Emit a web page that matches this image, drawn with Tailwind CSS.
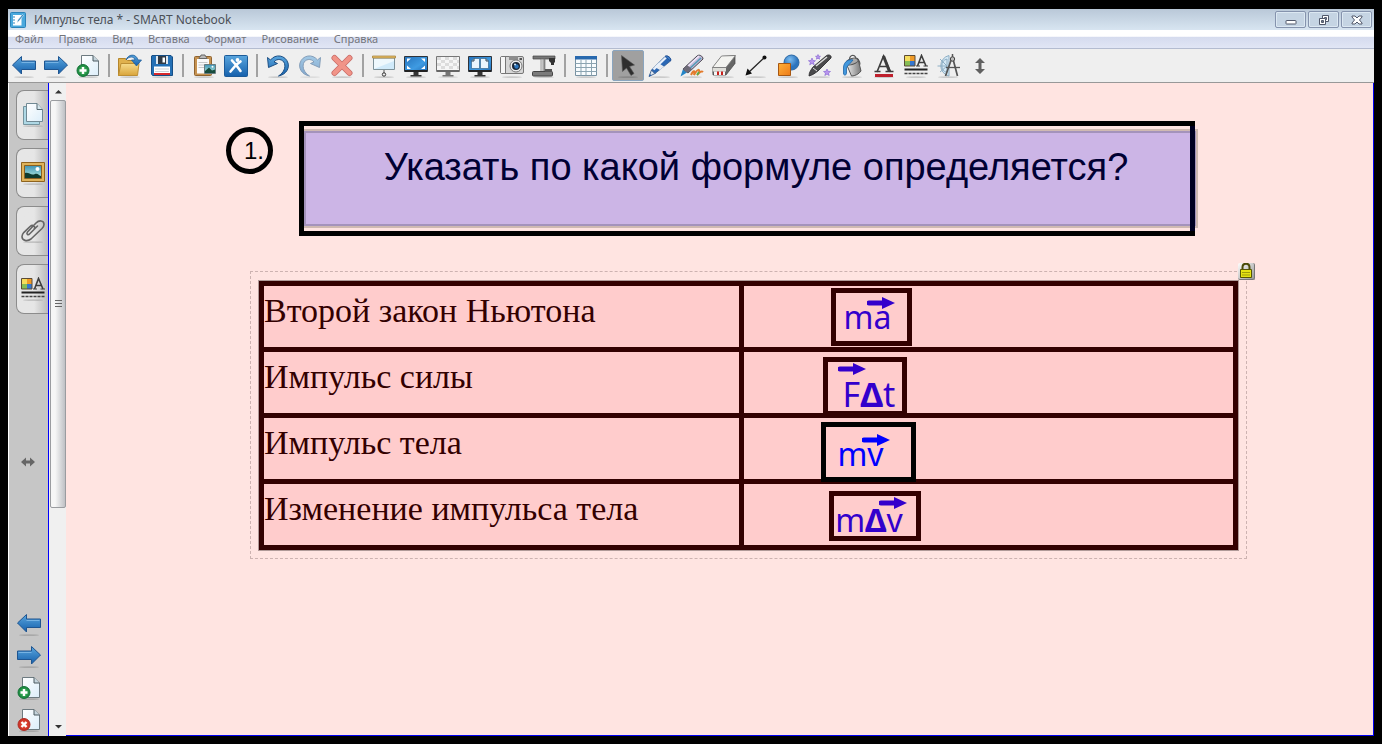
<!DOCTYPE html>
<html lang="ru">
<head>
<meta charset="utf-8">
<title>Импульс тела * - SMART Notebook</title>
<script src="https://cdn.jsdelivr.net/npm/@tailwindcss/browser@4"></script>
</head>
<body class="flex h-screen flex-col overflow-hidden bg-black px-2 pt-[9px] pb-2 font-['Noto_Sans','Open_Sans',sans-serif]">

<svg class="absolute size-0" aria-hidden="true">
  <defs>
    <linearGradient id="blue" x1="0" y1="0" x2="0" y2="1"><stop offset="0" stop-color="#5aa6de"/><stop offset="1" stop-color="#1560ac"/></linearGradient>
    <linearGradient id="screen" x1="0" y1="0" x2="1" y2="1"><stop offset="0" stop-color="#2573bd"/><stop offset=".6" stop-color="#3f9be2"/><stop offset="1" stop-color="#1e6bb5"/></linearGradient>
    <linearGradient id="folder" x1="0" y1="0" x2="0" y2="1"><stop offset="0" stop-color="#f7dc8c"/><stop offset="1" stop-color="#d9a43a"/></linearGradient>
    <linearGradient id="orange" x1="0" y1="0" x2="1" y2="1"><stop offset="0" stop-color="#ffb13a"/><stop offset="1" stop-color="#ec7a17"/></linearGradient>
    <linearGradient id="metal" x1="0" y1="0" x2="1" y2="0"><stop offset="0" stop-color="#f4f4f4"/><stop offset=".5" stop-color="#b5b5b5"/><stop offset="1" stop-color="#777"/></linearGradient>
    <linearGradient id="sheet" x1="0" y1="0" x2="1" y2="1"><stop offset="0" stop-color="#fff"/><stop offset="1" stop-color="#dceefa"/></linearGradient>
    <linearGradient id="sky" x1="0" y1="0" x2="0" y2="1"><stop offset="0" stop-color="#3f93b5"/><stop offset="1" stop-color="#b9efdf"/></linearGradient>
    <radialGradient id="green"><stop offset="0" stop-color="#4fc46a"/><stop offset="1" stop-color="#16813a"/></radialGradient>
    <radialGradient id="red"><stop offset="0" stop-color="#f0614c"/><stop offset="1" stop-color="#c8281c"/></radialGradient>
    <radialGradient id="ball" cx=".4" cy=".3"><stop offset="0" stop-color="#7dbdf0"/><stop offset="1" stop-color="#2c74bd"/></radialGradient>
    <symbol id="shade" viewBox="0 0 24 24"><ellipse cx="12" cy="23.2" rx="10" ry=".9" fill="#000" opacity=".15"/></symbol>
    <symbol id="left" viewBox="0 0 24 24"><use href="#shade"/><path d="M.5 11 9.500 2.500v4.500h14v8.500h-14V20z" fill="url(#blue)" stroke="#1f5590"/><path d="M9.500 8.500h13" stroke="#8cc4ee" opacity=".7"/></symbol>
    <symbol id="right" viewBox="0 0 24 24"><use href="#shade"/><path d="M23.500 11 14.500 2.500v4.500H.5v8.500h14V20z" fill="url(#blue)" stroke="#1f5590"/><path d="M1.500 8.500h13" stroke="#8cc4ee" opacity=".7"/></symbol>
    <symbol id="page" viewBox="0 0 24 24"><path d="M5.500 1.500h11.500l5.500 5.500v14.500h-17z" fill="url(#sheet)" stroke="#6d7a80"/><path d="M17 1.500V7h5.500" fill="#c5d4dc" stroke="#4c5a60"/></symbol>
    <symbol id="addpage" viewBox="0 0 24 24"><use href="#shade"/><use href="#page"/><circle cx="7" cy="16.500" r="6" fill="url(#green)" stroke="#16753a"/><path d="M7 13v7M3.500 16.500h7" stroke="#fff" stroke-width="2.400"/></symbol>
    <symbol id="delpage" viewBox="0 0 24 24"><use href="#shade"/><use href="#page"/><circle cx="7" cy="16.500" r="6" fill="url(#red)" stroke="#b03028"/><path d="m4.500 14 5 5m0-5-5 5" stroke="#fff" stroke-width="2.400"/></symbol>
    <symbol id="style" viewBox="0 0 24 24"><use href="#shade"/><path d="M1 2h5v5H1z" fill="#f5dc5c"/><path d="M6 2h5v5H6z" fill="#f09a26"/><path d="M1 7h5v5H1z" fill="#86bd55"/><path d="M6 7h5v5H6z" fill="#3576ce"/><path d="M.5 1.500h10.500v10.500H.5z" fill="none" stroke="#5b4a34"/><path d="m13.500 12 4-10.500L22 12M15 8.500h5" fill="none" stroke="#3e3e3e" stroke-width="1.600"/><path d="M12 12h4m3.500 0h4.500" stroke="#3e3e3e" stroke-width="1.200"/><path d="M.5 15.500h23" stroke="#222" stroke-width="2"/><path d="M.5 19.500h23" stroke="#444" stroke-width="1.500" stroke-dasharray="3 1"/></symbol>
    <symbol id="stand" viewBox="0 0 24 24"><use href="#shade"/><path d="M9.500 18h5v3h3v1.500h-11V21h3z" fill="#333"/></symbol>
    <symbol id="arrow" viewBox="0 0 28 14"><path d="M2 7h18" stroke="currentColor" stroke-width="5" stroke-linecap="round"/><path d="M15 1v12l13-6z" fill="currentColor"/></symbol>
  </defs>
</svg>

<header class="flex h-[21px] shrink-0 items-center justify-between bg-linear-to-b from-[#b9c8d8] to-[#d8e5f1] pl-[2px]">
  <div class="flex items-center gap-2">
    <svg class="size-4" viewBox="0 0 16 16"><rect x=".5" y=".5" width="15" height="15" rx="1" fill="#4aa9dd" stroke="#2b83b9"/><path d="M3 3h8.500v10.500H3z" fill="#fff"/><path d="M3 5h2m-2 3h2m-2 3h2" stroke="#3387bd"/><path d="m7 11 .8-3L12.500 2.500l1 1L9 9z" fill="#2e7fb5" stroke="#fff" stroke-width=".5"/></svg>
    <h1 class="text-xs leading-4 text-[#4b5057]">Импульс тела * - SMART Notebook</h1>
  </div>
  <div class="flex items-center gap-[2px] pr-[2px]">
    <button aria-label="Свернуть" class="flex h-[17px] w-[31px] items-center justify-center rounded-xs border border-[#8593ad] bg-[#c5d4e3] shadow-[inset_0_0_0_1px_#dce8f2]"><svg class="h-3 w-4" viewBox="0 0 16 12"><rect x="3" y="6.500" width="10" height="3.500" rx=".5" fill="#fff" stroke="#51586a"/></svg></button>
    <button aria-label="Развернуть" class="flex h-[17px] w-[31px] items-center justify-center rounded-xs border border-[#8593ad] bg-[#c5d4e3] shadow-[inset_0_0_0_1px_#dce8f2]"><svg class="h-3 w-4" viewBox="0 0 16 12" fill="#fff" stroke="#51586a"><path d="M6.500 1.500h6v6h-6zM8.500 3.500h2v2h-2z" fill-rule="evenodd"/><path d="M3.500 4.500h6v6h-6zM5.500 6.500h2v2h-2z" fill-rule="evenodd"/></svg></button>
    <button aria-label="Закрыть" class="flex h-[17px] w-[31px] items-center justify-center rounded-xs border border-[#8593ad] bg-[#c5d4e3] shadow-[inset_0_0_0_1px_#dce8f2]"><svg class="h-3 w-4" viewBox="0 0 16 12"><path d="M3 2h3l2 2 2-2h3v1L10.500 6 13 9v1h-3L8 8l-2 2H3V9l2.500-3L3 3z" fill="#fff" stroke="#51586a"/></svg></button>
  </div>
</header>

<nav class="flex h-[19px] shrink-0 items-center gap-[15px] border-b border-[#b4bcd0] bg-linear-to-b from-white from-35% via-[#d5dbee] via-40% to-[#e1e6f5] pl-[7px] text-[11px] leading-4 text-[#73757c]">
  <button>Файл</button><button>Правка</button><button>Вид</button><button>Вставка</button><button>Формат</button><button>Рисование</button><button>Справка</button>
</nav>

<div role="toolbar" class="flex h-[34px] shrink-0 items-center border-b border-[#989898] bg-[#efefef]">
  <button aria-label="Предыдущая страница" class="flex w-8 justify-center"><svg class="size-6"><use href="#left"/></svg></button>
  <button aria-label="Следующая страница" class="flex w-8 justify-center"><svg class="size-6"><use href="#right"/></svg></button>
  <button aria-label="Добавить страницу" class="flex w-8 justify-center"><svg class="size-6"><use href="#addpage"/></svg></button>
  <span class="flex w-[10px] justify-center"><i class="h-[23px] w-[2px] bg-[#a2a2a2]"></i></span>
  <button aria-label="Открыть" class="flex w-8 justify-center"><svg class="size-6" viewBox="0 0 24 24"><use href="#shade"/><path d="M.5 4.500h7l2 2h8v15H.5z" fill="#e0b14d" stroke="#b5862c"/><path d="M.5 21.500 3 9.500h18l-1.500 12z" fill="url(#folder)" stroke="#bd8f34"/><path d="M8 6C10 0 18-1 20 6h3.500l-5 6-5-6H17c-1-4-6-4-9 0z" fill="url(#blue)" stroke="#1f5e9a" stroke-width=".8"/></svg></button>
  <button aria-label="Сохранить" class="flex w-8 justify-center"><svg class="size-6" viewBox="0 0 24 24"><use href="#shade"/><path d="M2 1.500h19l1.500 1.500v18.500h-20L1.500 20V2z" fill="#2470b5" stroke="#174f86"/><path d="M6 2h12v8H6z" fill="#dfe7ef"/><path d="M8 2h8v8H8z" fill="#303a44"/><path d="M12.500 3.500h2.500v5h-2.500z" fill="#fff"/><path d="M4 12.500h16v8H4z" fill="#fff"/><path d="M5 15h14m-14 2.500h14" stroke="#cbd1d6"/><path d="M4 19h16v2H4z" fill="#d8282b"/></svg></button>
  <span class="flex w-[10px] justify-center"><i class="h-[23px] w-[2px] bg-[#a2a2a2]"></i></span>
  <button aria-label="Вставить" class="flex w-8 justify-center"><svg class="size-6" viewBox="0 0 24 24"><use href="#shade"/><rect x="2.500" y="2.500" width="17" height="19" rx="1" fill="#c69250" stroke="#8f6330"/><path d="M5 5h12v14.500H5z" fill="#fafafa"/><path d="M7 4.500c0-2 2-1.500 2-3.500h4c0 2 2 1.500 2 3.500z" fill="#b9b9b9" stroke="#666"/><path d="M6.500 8.500h9m-9 2.500h9m-9 2.500h6" stroke="#c8c8c8"/><path d="M12.500 10.500h11v9h-11z" fill="url(#sky)" stroke="#687c80"/><path d="m13 17 4-3.500 3 3 3-1V19H13z" fill="#174c3d"/><circle cx="20.500" cy="12.800" r="1" fill="#fff"/></svg></button>
  <button aria-label="Экран" class="flex w-8 justify-center"><svg class="size-6" viewBox="0 0 24 24"><rect x=".5" y="1.500" width="23" height="21" rx="1" fill="url(#blue)" stroke="#1c5b99"/><path d="M8 6.500 12 11l4.500-3.500M12 11l-5.500 6.500M12.500 11.500l4 5.500" fill="none" stroke="#fff" stroke-width="2.600" stroke-linecap="round" stroke-linejoin="round"/><circle cx="13.500" cy="6" r="1.900" fill="#fff"/></svg></button>
  <span class="flex w-[10px] justify-center"><i class="h-[23px] w-[2px] bg-[#a2a2a2]"></i></span>
  <button aria-label="Отменить" class="flex w-8 justify-center"><svg class="size-6" viewBox="0 0 24 24"><use href="#shade"/><path d="m1.500 3.500 1 10 9-4-3.500-1.500c3-4 9-3 10.500 1.500 1.200 4-.5 9-6 12.500 8-1.500 11-8 9.500-13C19.500 1 9.500-.5 4.500 6z" fill="url(#blue)" stroke="#1c4f84"/></svg></button>
  <button aria-label="Повторить" class="flex w-8 justify-center"><svg class="size-6 opacity-50" viewBox="0 0 24 24"><use href="#shade"/><path d="m22.500 3.500-1 10-9-4 3.500-1.500c-3-4-9-3-10.500 1.500-1.200 4 .5 9 6 12.500-8-1.500-11-8-9.500-13C4.500 1 14.500-.5 19.500 6z" fill="url(#blue)" stroke="#1c4f84"/></svg></button>
  <button aria-label="Удалить" class="flex w-8 justify-center"><svg class="size-6" viewBox="0 0 24 24"><use href="#shade"/><path d="m4.500 4 15 15m0-15-15 15" stroke="#c86c68" stroke-width="6" stroke-linecap="round"/><path d="m4.500 4 15 15m0-15-15 15" stroke="#f19488" stroke-width="4.500" stroke-linecap="round"/></svg></button>
  <span class="flex w-[10px] justify-center"><i class="h-[23px] w-[2px] bg-[#a2a2a2]"></i></span>
  <button aria-label="Затенение экрана" class="flex w-8 justify-center"><svg class="size-6" viewBox="0 0 24 24"><use href="#shade"/><path d="M1.500 4h21v11.500h-21z" fill="#eef8fd" stroke="#7d9199"/><path d="M2 15 22 7v8z" fill="#d0eafa"/><path d="M.5 2h23v2H.5z" fill="#e5bd68" stroke="#a17c33" stroke-width=".7"/><path d="M12 16v3" stroke="#555"/><circle cx="12" cy="20.500" r="1.700" fill="none" stroke="#333"/></svg></button>
  <button aria-label="Полный экран" class="flex w-8 justify-center"><svg class="size-6" viewBox="0 0 24 24"><use href="#stand"/><path d="M.5 2.500h23v15H.5z" fill="url(#screen)" stroke="#30343a"/><path d="M1 17h22" stroke="#222" stroke-width="2"/><path d="M3 8V4.500h4zM21 8V4.500h-4zM3 11.500V15h4zM21 11.500V15h-4z" fill="#fff"/></svg></button>
  <button aria-label="Прозрачный фон" class="flex w-8 justify-center"><svg class="size-6" viewBox="0 0 24 24"><g opacity=".65"><use href="#stand"/></g><path d="M.5 2.500h23v15H.5z" fill="#f6f6f6" stroke="#777"/><path d="M1 4.500h22m-18 3h18M1 10.500h22m-18 3h18" stroke="#dcdcdc" stroke-width="3" stroke-dasharray="4 4"/><path d="M1 17h22" stroke="#666" stroke-width="2"/></svg></button>
  <button aria-label="Две страницы" class="flex w-8 justify-center"><svg class="size-6" viewBox="0 0 24 24"><use href="#stand"/><path d="M.5 2.500h23v15H.5z" fill="url(#screen)" stroke="#30343a"/><path d="M1 17h22" stroke="#222" stroke-width="2"/><path d="M3.500 7 6 4.500h5.500v10h-8zM12.500 4.500H18L20.500 7v7.500h-8z" fill="#e9f5fd" stroke="#34658e" stroke-width=".7"/><path d="M6 4.500V7H3.500M18 4.500V7h2.500" fill="none" stroke="#345"/></svg></button>
  <button aria-label="Захват экрана" class="flex w-8 justify-center"><svg class="size-6" viewBox="0 0 24 24"><use href="#shade"/><rect x=".5" y="2.500" width="23" height="17" rx="1.500" fill="#d6d6d6" stroke="#777"/><path d="M1 3h4v16H1z" fill="#f6f6f6"/><path d="M5.500 3v16" stroke="#777"/><path d="M9 2h9v4H9z" fill="#8d8d8d"/><path d="M19.500 4h2.500v2h-2.500z" fill="#555"/><circle cx="16" cy="12" r="6" fill="#eee" stroke="#777"/><circle cx="16" cy="12" r="4" fill="#182536"/><circle cx="16.500" cy="12.500" r="2.200" fill="#2b75bd"/><circle cx="15" cy="10.500" r="1" fill="#d7eeff"/></svg></button>
  <button aria-label="Документ-камера" class="flex w-8 justify-center"><svg class="size-6" viewBox="0 0 24 24"><use href="#shade"/><path d="M1 2h22v3H1z" fill="#777" stroke="#444" stroke-width=".7"/><path d="M17 4h6v4l-1 1v2h-3V9l-2-2z" fill="#333"/><path d="M9 5h4v13H9z" fill="url(#metal)" stroke="#777" stroke-width=".7"/><rect x=".5" y="17.500" width="20" height="4.500" rx="1" fill="#7b7b7b" stroke="#444"/><path d="M13 15h7v3h-7z" fill="#555"/></svg></button>
  <span class="flex w-[10px] justify-center"><i class="h-[23px] w-[2px] bg-[#a2a2a2]"></i></span>
  <button aria-label="Таблица" class="flex w-8 justify-center"><svg class="size-6" viewBox="0 0 24 24"><use href="#shade"/><path d="M1.500 2.500h21v19h-21z" fill="#f8fcfe" stroke="#7892a2"/><path d="M1 2h22v3.500H1z" fill="#2869ae"/><path d="M1.500 9.500h21m-21 4h21m-21 4h21M7 5.500v16m5-16v16m5.500-16v16" stroke="#8ba4b1"/></svg></button>
  <span class="flex w-[10px] justify-center"><i class="h-[23px] w-[2px] bg-[#a2a2a2]"></i></span>
  <button aria-label="Выбрать" aria-pressed="true" class="flex h-[31px] w-8 items-center justify-center rounded-xs border border-[#8aa5bf] bg-[#a0a0a0]"><svg class="size-6" viewBox="0 0 24 24"><use href="#shade"/><path d="m5.500 1.500 1 16 4-3.500 4.500 7.500 3-2-4.500-7 5-1.500z" fill="#2e2e2e" stroke="#555" stroke-width=".6"/></svg></button>
  <button aria-label="Перо" class="flex w-8 justify-center"><svg class="size-6" viewBox="0 0 24 24"><use href="#shade"/><path d="m3.500 16 3.500 3.500-6 3z" fill="#dfe6ee" stroke="#294e7f" stroke-width=".8"/><path d="m1 22.500 1-2.500 1.500 1.500z" fill="#1e5aa8"/><path d="M3.500 16 17 2.500c2-2 7 1.500 5.500 4.500L7 19.500z" fill="#2a67b4" stroke="#315a90" stroke-width=".8"/><path d="m6.500 13 4-4 5.500 3.500-4 3.500z" fill="#e8ebf0"/><path d="M5.500 15.500 18.500 3" stroke="#e9f1fb" stroke-width="2.400"/><path d="m17 2.500 5.500 4.500c1.500-3-3.500-6.500-5.500-4.500z" fill="#3a7cc8" stroke="#204d92" stroke-width=".8"/></svg></button>
  <button aria-label="Художественное перо" class="flex w-8 justify-center"><svg class="size-6" viewBox="0 0 24 24"><use href="#shade"/><path d="M11 21c3-6 4-4 3 0 4-7 6-6 5-2 2-2 3-2 4-1" fill="none" stroke="#e37b2c" stroke-width="2"/><path d="m17 21 2-3" stroke="#5daa47" stroke-width="2"/><path d="m3 15 4 3.500-6.500 4z" fill="#2385c7"/><path d="M3 15 17 2c2-2 6 0 6 3L8 19z" fill="#c5b9d8" stroke="#4a4852"/><path d="M5 15 19 2" stroke="#f0e7f8" stroke-width="1.500"/><path d="M7 17 21 4" stroke="#4e9bb6" stroke-width="1.500"/><path d="m3 15 4-4 5 4-4 4z" fill="#6d6a77"/></svg></button>
  <button aria-label="Ластик" class="flex w-8 justify-center"><svg class="size-6" viewBox="0 0 24 24"><use href="#shade"/><path d="m.5 14 9-11.500L23 1.500v8L14 21H1z" fill="#666" stroke="#444" stroke-width=".7"/><path d="M.5 13.500 9.500 2 23.500 1.500 14 13.500z" fill="#f3f3f0" stroke="#777" stroke-width=".8"/><path d="M.5 14H14v3.500H.5z" fill="#deded9"/><path d="M2 17.500h11V21H2z" fill="#f5f5f5"/><path d="M5 17.500h2V21H5zM9 17.500h2V21H9z" fill="#c8201b"/></svg></button>
  <button aria-label="Линия" class="flex w-8 justify-center"><svg class="size-6" viewBox="0 0 24 24"><use href="#shade"/><path d="m4 19 17-16" stroke="#222" stroke-width="1.300"/><path d="m1.500 21.500 2-7 4.500 5z" fill="#111"/><circle cx="20.500" cy="3.500" r="2" fill="#111"/></svg></button>
  <button aria-label="Фигуры" class="flex w-8 justify-center"><svg class="size-6" viewBox="0 0 24 24"><use href="#shade"/><circle cx="15.500" cy="8.500" r="7.500" fill="url(#ball)" stroke="#2b68a5"/><path d="M2.500 9.500h12v12h-12z" fill="url(#orange)" stroke="#a65712"/></svg></button>
  <button aria-label="Волшебное перо" class="flex w-8 justify-center"><svg class="size-6" viewBox="0 0 24 24"><use href="#shade"/><path d="M1 22c0-4 2-6 4-9L18 2c2-2 6-1 5 2L10 17c-3 2-5 4-9 5z" fill="#4a4a4c" stroke="#252527" stroke-width=".8"/><path d="M8 12 19 3" stroke="#ddd" stroke-width="1.500"/><path d="m5 14 4 3" stroke="#ddd"/><g fill="#b995ee" stroke="#8260d2" stroke-width=".6"><path d="m4 4 1 2.500 2.500.2-2 1.600.7 2.500L4 9.400l-2.300 1.400.7-2.500-2-1.600L3 6.500z"/><path d="m10 .5.7 1.700 1.800.1-1.400 1.100.5 1.800-1.600-1L8.400 5.200l.5-1.800L7.500 2.300l1.800-.1z"/><path d="m19 15 1 2.300 2.500.2-2 1.600.7 2.400-2.200-1.400-2.200 1.400.7-2.400-2-1.600 2.500-.2z"/></g></svg></button>
  <button aria-label="Заливка" class="flex w-8 justify-center"><svg class="size-6" viewBox="0 0 24 24"><use href="#shade"/><path d="m6 9 12-4 3 12c-2 3-6 5-9.500 5z" fill="url(#metal)" stroke="#555"/><ellipse cx="12" cy="7.500" rx="6.500" ry="3" transform="rotate(-20 12 7.500)" fill="#aaa" stroke="#555"/><path d="M10 8C8 1 15-1 16 4.500c2 0 4 3 4 6" fill="none" stroke="#555" stroke-width="1.200"/><path d="M13 6C8 5 4 8 3.500 13v7c1 2 3 1 3-1v-5c1-2 2-3 3.500-4.500z" fill="#4297dc" stroke="#1f65a7" stroke-width=".8"/></svg></button>
  <button aria-label="Текст" class="flex w-8 justify-center"><svg class="size-6" viewBox="0 0 24 24"><use href="#shade"/><path d="M5 18 11.500 2l7 16M8 12.500h7.500" fill="none" stroke="#3c3c3c" stroke-width="1.600"/><path d="m11.500 2 6 15.500" stroke="#3c3c3c" stroke-width="3"/><path d="M2.500 17.500h6m5 0h8" stroke="#3c3c3c" stroke-width="1.400"/><path d="M3 20h18v3H3z" fill="#be202d"/></svg></button>
  <button aria-label="Свойства" class="flex w-8 justify-center"><svg class="size-6"><use href="#style"/></svg></button>
  <button aria-label="Измерительные инструменты" class="flex w-8 justify-center"><svg class="size-6" viewBox="0 0 24 24"><use href="#shade"/><path d="M13 1.500a10.500 10.500 0 0 0 0 20.500z" fill="#d5e8f4" stroke="#8daec4"/><path d="M11 5a7 7 0 0 0 0 13.500zM1.500 12H11M4 5l7 7-7 6" fill="none" stroke="#8daec4"/><path d="M15.500 5 9.500 22M17 5l4.500 17" stroke="#555" stroke-width="1.700"/><path d="M10 13.500h14" stroke="#555" stroke-width="1.300"/><circle cx="16.500" cy="5" r="2.200" fill="#bbb" stroke="#444"/><path d="M16.500 0v3" stroke="#555" stroke-width="1.500"/></svg></button>
  <button aria-label="Переместить панель" class="flex w-8 justify-center"><svg class="size-6" viewBox="0 0 24 24"><path d="m12 4 5 5h-3.500v6H17l-5 5-5-5h3.500V9H7z" fill="#606060"/></svg></button>
</div>

<div class="flex min-h-0 flex-1">
  <aside class="flex w-10 shrink-0 flex-col border-l border-white bg-[#c6c6c6] pt-[7px]">
    <div class="flex flex-col gap-2 pl-[7px]">
      <button aria-label="Сортировщик страниц" class="flex h-[50px] items-center justify-center rounded-l-lg border border-r-0 border-[#8c8c8c] bg-linear-to-r from-[#e6e6e6] from-55% to-[#bababa]"><svg class="size-6" viewBox="0 0 24 24"><use href="#shade"/><path d="M2.500 3.500h16v18h-16z" fill="#aed8e5" stroke="#75949e"/><path d="M5.500.5H16l5.500 6V18.500h-16z" fill="url(#sheet)" stroke="#708994"/><path d="M16 .5v6h5.500" fill="#d6e7ee" stroke="#556870"/></svg></button>
      <button aria-label="Галерея" class="flex h-[50px] items-center justify-center rounded-l-lg border border-r-0 border-[#8c8c8c] bg-linear-to-r from-[#e6e6e6] from-55% to-[#bababa]"><svg class="size-6" viewBox="0 0 24 24"><use href="#shade"/><path d="M.5 1.500h23v19H.5z" fill="#dfb35b" stroke="#8f641f"/><path d="M3.500 4.500h17v13h-17z" fill="url(#sky)" stroke="#8a6121"/><path d="M4 12c4-1 6 3 10 1 3-1 4 2 6 2v2H4z" fill="#0e3b2e"/><circle cx="16.500" cy="8" r="2" fill="#fff"/></svg></button>
      <button aria-label="Вложения" class="flex h-[50px] items-center justify-center rounded-l-lg border border-r-0 border-[#8c8c8c] bg-linear-to-r from-[#e6e6e6] from-55% to-[#bababa]"><svg class="size-6" viewBox="0 0 24 24"><use href="#shade"/><path d="m16.500 7-8 8c-1.500 1.500-3.500 0-2-2l8.500-9c3-3 8-3 8 1.500 0 2-1 3-2 4L10 20c-4 3-9 1.500-9-2.500 0-2 1-3 2-4.200L9 7.500c3-2.500 6 0 4 3l-5 5" fill="none" stroke="#666" stroke-width="1.600" stroke-linecap="round"/></svg></button>
      <button aria-label="Свойства объекта" class="flex h-[50px] items-center justify-center rounded-l-lg border border-r-0 border-[#8c8c8c] bg-linear-to-r from-[#e6e6e6] from-55% to-[#bababa]"><svg class="size-6"><use href="#style"/></svg></button>
    </div>
    <div class="flex flex-1 items-center justify-center pr-[2px]">
      <svg class="h-3 w-4" viewBox="0 0 16 12"><path d="m1 5 5-4.500v3h4v-3L15 5l-5 4.500v-3H6v3z" fill="#666"/></svg>
    </div>
    <div class="flex flex-col gap-2 pb-1 pl-2">
      <button aria-label="Назад" class="size-6"><svg class="size-6"><use href="#left"/></svg></button>
      <button aria-label="Вперёд" class="size-6"><svg class="size-6"><use href="#right"/></svg></button>
      <button aria-label="Новая страница" class="size-6"><svg class="size-6"><use href="#addpage"/></svg></button>
      <button aria-label="Удалить страницу" class="size-6"><svg class="size-6"><use href="#delpage"/></svg></button>
    </div>
  </aside>

  <div class="flex w-[18px] shrink-0 flex-col border-l border-[#0000ff] bg-[#f0f0f0] pl-px">
    <svg class="h-[17px] w-4 shrink-0" viewBox="0 0 16 17"><path d="m5 10.500 3.500-3.500 3.500 3.500z" fill="#333"/></svg>
    <div class="flex-1">
      <div class="flex h-[66%] flex-col items-center justify-center gap-[2px] rounded-xs border border-[#9a9ca0] bg-linear-to-r from-[#f6f6f6] from-30% to-[#bfc1c5]">
        <i class="h-px w-[7px] bg-[#666]"></i><i class="h-px w-[7px] bg-[#666]"></i><i class="h-px w-[7px] bg-[#666]"></i>
      </div>
    </div>
    <svg class="h-[18px] w-4 shrink-0" viewBox="0 0 16 18"><path d="m5 7 3.500 3.500L12 7z" fill="#333"/></svg>
  </div>

  <main class="min-w-0 flex-1 border-r border-b border-[#0000f0] bg-[#ffe4e1]">
    <div class="flex items-start gap-[26px] pt-[38px] pr-[178px] pl-[160px]">
      <div class="mt-[6px] flex size-[47px] shrink-0 items-center justify-end rounded-full border-[5px] border-black pr-1 font-['Liberation_Sans',Arial,sans-serif] text-2xl text-black">1.</div>
      <div class="relative h-[115px] flex-1 border-[5px] border-black">
        <div class="absolute -right-2 top-[3px] bottom-[3px] left-0 border-y-2 border-r-2 border-[#cfb9b2]"></div>
        <h2 class="absolute -right-[6px] top-[5px] bottom-[5px] left-0 border-2 border-[#a493bb] bg-[#ccb5e6] pt-3 pr-1 pl-4 text-center font-['Liberation_Sans',Arial,sans-serif] text-[38px] leading-[44px] whitespace-nowrap text-[#000033]">Указать по какой формуле определяется?</h2>
        <div class="absolute -right-[5px] inset-y-0 w-[5px] bg-[#000022]"></div>
      </div>
    </div>

    <div class="relative mt-[35px] mr-[126px] ml-[184px] border border-dashed border-[#cdb3b1] px-[8px] pt-[9px] pb-[8px]">
      <table class="w-full table-fixed border-collapse border-[5px] border-[#330000] bg-[#ffcccc] font-['Liberation_Serif','Times_New_Roman',serif] text-[34px] leading-[40px] text-[#330000] shadow-[0_0_0_1px_#b09a98]">
        <colgroup><col class="w-[480px]"><col></colgroup>
        <tbody>
        <tr class="h-[66px]">
          <td class="border-[5px] border-[#330000] p-0 pt-[5px] align-top">Второй закон Ньютона</td>
          <td class="relative border-[5px] border-[#330000] p-0">
            <div class="absolute top-[2px] left-[87px] flex h-[58px] w-[81px] items-center justify-center border-[5px] border-[#330000] pr-2 font-['Comic_Sans_MS','Noto_Sans',sans-serif] text-[32px] leading-none text-[#3300cc]">ma<svg class="absolute top-[3px] left-[31px] h-[14px] w-7"><use href="#arrow"/></svg></div>
          </td>
        </tr>
        <tr class="h-[66px]">
          <td class="border-[5px] border-[#330000] p-0 pt-[5px] align-top">Импульс силы</td>
          <td class="relative border-[5px] border-[#330000] p-0">
            <div class="absolute top-[5px] left-[79px] flex h-[59px] w-[84px] items-end justify-center border-[5px] border-[#330000] pl-2 font-['Comic_Sans_MS','Noto_Sans',sans-serif] text-[34px] leading-none text-[#3300cc]">F<b>Δ</b>t<svg class="absolute top-0 left-[10px] h-[14px] w-7"><use href="#arrow"/></svg></div>
          </td>
        </tr>
        <tr class="h-[66px]">
          <td class="border-[5px] border-[#330000] p-0 pt-[5px] align-top">Импульс тела</td>
          <td class="relative border-[5px] border-[#330000] p-0">
            <div class="absolute top-[4px] left-[77px] z-10 flex h-[60px] w-[95px] items-center justify-center border-[5px] border-black pt-1 pr-4 font-['Comic_Sans_MS','Noto_Sans',sans-serif] text-[32px] leading-none text-[#0000ff]">mv<svg class="absolute top-[6px] left-[36px] h-[14px] w-7"><use href="#arrow"/></svg></div>
          </td>
        </tr>
        <tr class="h-[66px]">
          <td class="border-[5px] border-[#330000] p-0 pt-[5px] align-top">Изменение импульса тела</td>
          <td class="relative border-[5px] border-[#330000] p-0">
            <div class="absolute top-[7px] left-[85px] flex h-[50px] w-[92px] items-end justify-center border-[5px] border-[#330000] pr-3 font-['Comic_Sans_MS','Noto_Sans',sans-serif] text-[32px] leading-none text-[#3300cc]">m<b>Δ</b>v<svg class="absolute top-0 left-[45px] h-[14px] w-7"><use href="#arrow"/></svg></div>
          </td>
        </tr>
        </tbody>
      </table>
      <button aria-label="Заблокировано" class="absolute -top-[9px] -right-[9px] size-[17px] rounded-xs border-r border-b border-[#777] bg-linear-to-br from-white to-[#999]"><svg class="size-4" viewBox="0 0 16 16"><path d="M4.500 7V4.500c0-5 7-5 7 0V7" fill="none" stroke="#4b4a08" stroke-width="2"/><path d="M2.500 6.500h11v8h-11z" fill="#e6e312" stroke="#565504"/><path d="M4 9.500h8m-8 2.500h8" stroke="#a09d0a"/></svg></button>
    </div>
  </main>
</div>
</body>
</html>
